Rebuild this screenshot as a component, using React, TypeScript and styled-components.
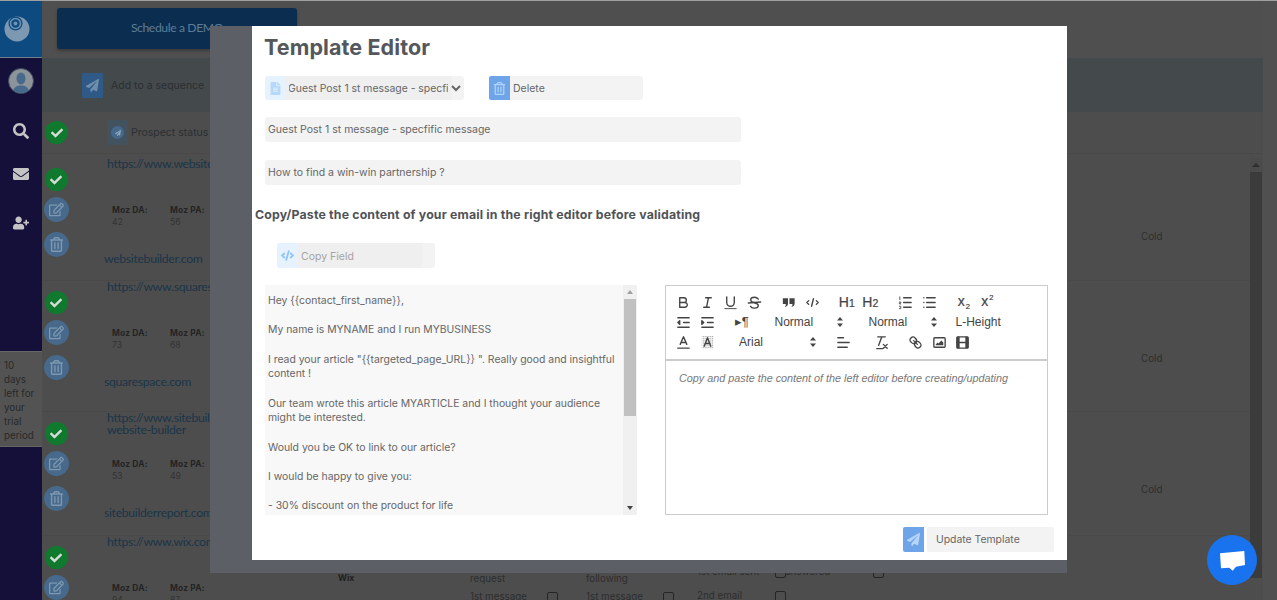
import React from "react";
import styled, { createGlobalStyle } from "styled-components";
import { FaCheck, FaCode, FaEnvelope, FaFileAlt, FaPaperPlane, FaRegEdit, FaRegTrashAlt, FaSearch, FaUserPlus } from "react-icons/fa";

const Global = createGlobalStyle`
  html, body { margin: 0; padding: 0; height: 600px; overflow: hidden; background: #505050; }
  * { box-sizing: border-box; }
  body { font-family: Inter, "Open Sans", sans-serif; }
`;

const Page = styled.div`
  display: flex; height: 600px; overflow: hidden; border-top: 1px solid #a0a0a0;
`;
const Sidebar = styled.aside`
  width: 42px; flex: none; background: #15103a; display: flex; flex-direction: column; align-items: center;
`;
const LogoBlock = styled.div`
  width: 42px; height: 57px; background: #0c4a80; border-bottom: 1px solid #6f7f8c; display: flex; align-items: center; justify-content: center; padding: 0 8px 1px 0;
`;
const Avatar = styled.div`
  width: 26px; height: 26px; margin-top: 10px; border-radius: 50%; overflow: hidden; background: #8d9499; border: 1px solid #3d4660;
`;
const NavIcon = styled.div<{ $mt: number }>`
  margin-top: ${p => p.$mt}px; height: 18px; color: #c4c4c4; font-size: 16px; line-height: 18px;
`;
const TrialNote = styled.div`
  width: 42px; margin-top: 118px; height: 96px; padding: 7px 4px 0 4px; background: #535353; border-top: 1px solid #666; border-bottom: 1px solid #666;
  font-size: 9.8px; line-height: 14.1px; color: #292929;
`;
const Main = styled.main`
  width: 1221px; flex: none; position: relative; background: #4d4d4d;
`;
const TopBar = styled.div`
  height: 57px; background: #4f4f4f; padding: 7px 0 0 15px;
`;
const DemoButton = styled.div`
  width: 240px; height: 41px; border-radius: 3px; background: #0b2d50; color: #5d7d97; text-align: center;
  font: 12.2px/39px Lato, sans-serif; letter-spacing: -.4px; box-shadow: 0 2px 3px #3a3a3a;
`;
const Band = styled.div`
  height: 54px; background: #44494c; display: flex; align-items: center; padding: 0 0 0 40px;
`;
const SquareIcon = styled.div<{ $bg: string; $fg: string; $w?: number; $h?: number }>`
  width: ${p => p.$w ?? 21}px; height: ${p => p.$h ?? 25}px; flex: none; background: ${p => p.$bg}; color: ${p => p.$fg};
  display: flex; align-items: center; justify-content: center; font-size: 13px; border-radius: 2px 0 0 2px;
`;
const BandLabel = styled.span`
  margin-left: 8px; font-size: 10.5px; color: #2b2f33;
`;
const StatusLabel = styled.span`
  margin-left: 3px; font-size: 10.5px; color: #2b2f33;
`;
const StatusRow = styled.div`
  height: 41px; display: flex; align-items: center; padding-left: 3px;
`;
const StatusChip = styled.div`
  margin-left: 39px; display: flex; align-items: center; height: 25px;
`;
const Dot = styled.div`
  width: 13px; height: 13px; border-radius: 50%; background: #46688a; color: #8ea6bd; font-size: 6px; display: flex; align-items: center; justify-content: center;
`;
const RoundCheck = styled.div`
  width: 23px; height: 23px; flex: none; border-radius: 50%; background: #0f7a2e; color: #d5dcd7; display: flex; align-items: center; justify-content: center; font-size: 12px;
`;
const RoundAction = styled.div<{ $mt: number }>`
  width: 25px; height: 25px; flex: none; margin-top: ${p => p.$mt}px; border-radius: 50%; background: #476a8c; color: #7d98b0; display: flex; align-items: center; justify-content: center; font-size: 15px;
`;
const Row = styled.section<{ $h: number; $pt: number }>`
  height: ${p => p.$h}px; padding-top: ${p => p.$pt}px; border-top: 1px solid #494949;
  display: grid; grid-template-columns: 28px 268px 132px 116px 111px 88px 356px 1fr;
`;
const Actions = styled.div`
  padding-top: 10px; display: flex; flex-direction: column; align-items: center;
`;
const LinkBlock = styled.div`
  height: 46px; margin-left: 37px; width: 340px; font: 12.3px/12px Lato, sans-serif; letter-spacing: -.35px; color: #1b3549; white-space: pre-line;
`;
const Metrics = styled.div`
  margin-left: 42px; display: grid; grid-template-columns: 58px 58px;
`;
const MozLabel = styled.div`
  font-size: 8.4px; line-height: 12px; font-weight: 700; color: #232323; letter-spacing: .2px;
`;
const MozValue = styled.div`
  font-size: 8.6px; line-height: 12px; color: #333;
`;
const Domain = styled.div`
  margin: 23px 0 0 34px; font: 12.2px/16px Lato, sans-serif; letter-spacing: -.3px; color: #1b3549; white-space: nowrap;
`;
const Cell = styled.div<{ $pt: number }>`
  padding-top: ${p => p.$pt}px; font-size: 9.8px; line-height: 18px; color: #2d2d2d;
`;
const BoldCell = styled(Cell)`
  font-size: 8.6px; font-weight: 700; color: #1f1f1f;
`;
const StackCell = styled(Cell)`
  display: flex; flex-direction: column; gap: 6px;
`;
const CheckLine = styled.div<{ $w: number }>`
  display: grid; grid-template-columns: ${p => p.$w}px 11px; align-items: center; white-space: nowrap;
`;
const Box = styled.span`
  width: 11px; height: 11px; border: 1px solid #262626; border-radius: 2px;
`;
const Cold = styled.div<{ $pt: number }>`
  padding-top: ${p => p.$pt}px; font-size: 9.8px; line-height: 12px; color: #2e2e2e;
`;
const ScrollRail = styled.div`
  position: absolute; left: 1208px; top: 157px; width: 12px; height: 420px; background: #3b3b3b;
`;
const ScrollCap = styled.div`
  height: 14px; background: #4b4b4b; display: flex; align-items: center; justify-content: center;
  &::before { content: ""; border: 4px solid transparent; border-top: 0; border-bottom: 4px solid #2f2f2f; }
`;

const Overlay = styled.div`
  position: fixed; inset: 0; padding: 26px 0 0 210px;
`;
const Frame = styled.div`
  width: 857px; height: 547px; background: #5c6066; padding-left: 42px;
`;
const Panel = styled.div`
  width: 815px; height: 534px; background: #fff; color: #666; overflow: hidden;
`;
const Title = styled.h1`
  margin: 8px 0 0 12px; font-size: 21.5px; line-height: 26px; font-weight: 700; color: #54575c; letter-spacing: .1px;
`;
const SelectRow = styled.div`
  margin: 16px 0 0 13px; height: 24px; display: flex;
`;
const PaleIcon = styled(SquareIcon)`
  border-radius: 3px 0 0 3px;
`;
const TemplateSelect = styled.select`
  width: 179px; height: 24px; border: 0; padding: 0; outline: 0; border-radius: 0 3px 3px 0; color: #666; font: 10.4px Inter, sans-serif; text-indent: -1px;
  background: linear-gradient(90deg, #efefef 167px, #f3f3f3 167px);
`;
const DeleteGroup = styled.div`
  margin-left: 25px; display: flex;
`;
const DeleteButton = styled.div`
  width: 133px; height: 24px; background: #f3f3f3; border-radius: 0 3px 3px 0; padding-left: 3px; font-size: 10.5px; line-height: 26px; color: #666;
`;
const Field = styled.input<{ $mt: number }>`
  display: block; margin: ${p => p.$mt}px 0 0 13px; width: 476px; height: 25px; border: 0; outline: 0; border-radius: 3px; padding: 0 3px; background: #f3f3f3;
  color: #666; font: 10.5px Inter, sans-serif;
`;
const Heading = styled.h2`
  margin: 21px 0 0 3px; font-size: 12.3px; line-height: 18px; font-weight: 700; color: #4f5357; letter-spacing: .18px; white-space: nowrap;
`;
const CopyField = styled.div`
  margin: 19px 0 0 25px; width: 158px; height: 25px; display: flex; background: #f3f3f3; border-radius: 3px; overflow: hidden;
`;
const CopyLabel = styled.div`
  width: 124px; background: #efefef; padding-left: 3px; color: #a4a4a4; font-size: 10.5px; line-height: 27px;
`;
const Editors = styled.div`
  margin: 17px 0 0 13px; height: 230px; display: flex; gap: 28px;
`;
const SourcePane = styled.div`
  width: 372px; height: 230px; background: #f8f8f8; display: flex;
`;
const SourceText = styled.div`
  flex: 1; padding: 9px 7px 0 3px; overflow: hidden; font-size: 10.4px; line-height: 14.67px; color: #666;
  p { margin: 0 0 14.67px; }
`;
const SourceBar = styled.div`
  width: 14px; flex: none; background: #f0f0f0; display: flex; flex-direction: column; align-items: center;
`;
const BarCap = styled.div<{ $down?: boolean }>`
  height: 14px; width: 14px; display: flex; align-items: center; justify-content: center;
  &::before { content: ""; border: 3.5px solid transparent; ${p => p.$down ? "border-bottom:0;border-top:4px solid #444;" : "border-top:0;border-bottom:4px solid #a0a0a0;"} }
`;
const BarThumb = styled.div`
  width: 12px; height: 117px; background: #c1c1c1;
`;
const BarRest = styled.div`
  flex: 1;
`;
const QuillBox = styled.div`
  width: 383px; height: 230px; border: 1px solid #ccc; display: flex; flex-direction: column;
`;
const Toolbar = styled.div`
  height: 75px; flex: none; padding: 6px 0 0 6px; border-bottom: 2px solid #ccc;
`;
const ToolRow = styled.div`
  height: 20px; display: flex; align-items: center;
`;
const Tool = styled.span<{ $ml?: number }>`
  width: 23.5px; height: 20px; flex: none; margin-left: ${p => p.$ml ?? 0}px; display: flex; align-items: center; justify-content: center; color: #444;
  font: 13px/20px "Liberation Sans", sans-serif; white-space: nowrap;
  svg { width: 17px; height: 17px; fill: none; stroke: #444; stroke-width: 1.45; stroke-linecap: round; stroke-linejoin: round; }
`;
const ScriptMark = styled.span`
  font-size: 14px; -webkit-text-stroke: .2px #444;
`;
const SubDigit = styled.small`
  font-size: 7.5px; position: relative; top: 3px; margin-left: 1px;
`;
const SupDigit = styled.small`
  font-size: 7.5px; position: relative; top: -6px; margin-left: 1px;
`;
const HeadMark = styled.span`
  font-size: 14px; -webkit-text-stroke: .2px #444;
  small { font-size: 10.5px; }
`;
const Picker = styled.span<{ $w: number; $ml: number }>`
  width: ${p => p.$w}px; flex: none; margin-left: ${p => p.$ml}px; display: flex; justify-content: space-between; align-items: center; color: #444;
  font: 12px/20px "Liberation Sans", sans-serif;
  svg { width: 18px; height: 18px; margin-right: -5px; fill: #444; }
`;
const Placeholder = styled.div`
  padding: 10px 13px; font: italic 10.8px/15px "Liberation Sans", sans-serif; color: #777;
`;
const Footer = styled.div`
  margin-top: 12px; padding-right: 13px; display: flex; justify-content: flex-end;
`;
const UpdateButton = styled.div`
  margin-left: 3px; width: 127px; height: 25px; background: #f3f3f3; border-radius: 2px; padding-left: 9px; font-size: 10.4px; line-height: 26px; color: #666;
`;
const ChatBubble = styled.div`
  position: fixed; left: 1207px; top: 535px; width: 50px; height: 50px; border-radius: 50%; background: #1a73ee;
  display: flex; align-items: center; justify-content: center;
`;

const Picks = () => (
  <svg viewBox="0 0 18 18"><polygon points="6,10.5 9,14 12,10.5" /><polygon points="6,7.5 9,4 12,7.5" /></svg>
);

const rows = [
  { h: 127, pt: 4, coldTop: 73, link: "https://www.websitebuilder.com/", domain: "websitebuilder.com", da: 42, pa: 56 },
  { h: 131, pt: 0, coldTop: 72, link: "https://www.squarespace.com/", domain: "squarespace.com", da: 73, pa: 68 },
  { h: 124, pt: 0, coldTop: 72, link: "https://www.sitebuilderreport.com/\nwebsite-builder", domain: "sitebuilderreport.com", da: 53, pa: 49 },
  { h: 70, pt: 0, coldTop: 72, link: "https://www.wix.com/", domain: "wix.com", da: 94, pa: 87, extra: true },
];

export default function App() {
  return (
    <>
      <Global />
      <Page>
        <Sidebar>
          <LogoBlock>
            <svg width="26" height="26" viewBox="0 0 26 26">
              <circle cx="13" cy="13" r="12.5" fill="#7d99b1" />
              <circle cx="11.500" cy="7.500" r="7" fill="#0c4a80" />
              <circle cx="11.500" cy="7.500" r="5" fill="none" stroke="#6c93b3" strokeWidth="1.600" />
              <circle cx="11.500" cy="7.500" r="2" fill="#6c93b3" />
            </svg>
          </LogoBlock>
          <Avatar>
            <svg width="24" height="24" viewBox="0 0 24 24">
              <ellipse cx="12" cy="9.500" rx="4.500" ry="6" fill="#47698c" />
              <path d="M4 24c0-6 4-7.500 8-7.500s8 1.500 8 7.500z" fill="#47698c" />
            </svg>
          </Avatar>
          <NavIcon $mt={29}><FaSearch /></NavIcon>
          <NavIcon $mt={25}><FaEnvelope /></NavIcon>
          <NavIcon $mt={31}><FaUserPlus /></NavIcon>
          <TrialNote>10 days left for your trial period</TrialNote>
        </Sidebar>
        <Main>
          <TopBar><DemoButton>Schedule a DEMO</DemoButton></TopBar>
          <Band>
            <SquareIcon $bg="#2f5a87" $fg="#6f8fab"><FaPaperPlane /></SquareIcon>
            <BandLabel>Add to a sequence</BandLabel>
          </Band>
          <StatusRow>
            <RoundCheck><FaCheck /></RoundCheck>
            <StatusChip>
              <SquareIcon $bg="#43525f" $fg="#8ea6bd"><Dot><FaPaperPlane /></Dot></SquareIcon>
              <StatusLabel>Prospect status</StatusLabel>
            </StatusChip>
          </StatusRow>
          {rows.map(r => (
            <Row key={r.domain} $h={r.h} $pt={r.pt}>
              <Actions>
                <RoundCheck><FaCheck /></RoundCheck>
                <RoundAction $mt={6}><FaRegEdit /></RoundAction>
                <RoundAction $mt={10}><FaRegTrashAlt /></RoundAction>
              </Actions>
              <div>
                <LinkBlock>{r.link}</LinkBlock>
                <Metrics>
                  <MozLabel>Moz DA:</MozLabel><MozLabel>Moz PA:</MozLabel>
                  <MozValue>{r.da}</MozValue><MozValue>{r.pa}</MozValue>
                </Metrics>
                <Domain>{r.domain}</Domain>
              </div>
              {r.extra ? (
                <>
                  <BoldCell $pt={33}>Wix</BoldCell>
                  <Cell $pt={34}>request<CheckLine $w={77}>1st message<Box /></CheckLine></Cell>
                  <Cell $pt={34}>following<CheckLine $w={77}>1st message<Box /></CheckLine></Cell>
                  <StackCell $pt={27}><CheckLine $w={78}>1st email sent<Box /></CheckLine><CheckLine $w={78}>2nd email<Box /></CheckLine></StackCell>
                  <Cell $pt={27}><CheckLine $w={88}>answered<Box /></CheckLine></Cell>
                </>
              ) : (
                <>
                  <span /><span /><span /><span /><span />
                  <Cold $pt={r.coldTop}>Cold</Cold>
                </>
              )}
            </Row>
          ))}
          <ScrollRail><ScrollCap /></ScrollRail>
        </Main>
      </Page>

      <Overlay>
        <Frame>
          <Panel>
            <Title>Template Editor</Title>
            <SelectRow>
              <PaleIcon $bg="#e6f2fe" $fg="#b5d8fb" $w={20} $h={24}><FaFileAlt /></PaleIcon>
              <TemplateSelect defaultValue="a">
                <option value="a">Guest Post 1 st message - specfific message</option>
              </TemplateSelect>
              <DeleteGroup>
                <SquareIcon $bg="#6ea5e8" $fg="#b5d4f7" $h={24}><FaRegTrashAlt /></SquareIcon>
                <DeleteButton>Delete</DeleteButton>
              </DeleteGroup>
            </SelectRow>
            <Field $mt={17} readOnly value="Guest Post 1 st message - specfific message" />
            <Field $mt={18} readOnly value="How to find a win-win partnership ?" />
            <Heading>Copy/Paste the content of your email in the right editor before validating</Heading>
            <CopyField>
              <SquareIcon $bg="#e6f2fe" $fg="#8fc4fa"><FaCode /></SquareIcon>
              <CopyLabel>Copy Field</CopyLabel>
            </CopyField>
            <Editors>
              <SourcePane>
                <SourceText>
                  <p>Hey {"{{contact_first_name}}"},</p>
                  <p>My name is MYNAME and I run MYBUSINESS</p>
                  <p>I read your article "{"{{targeted_page_URL}}"} ". Really good and insightful content !</p>
                  <p>Our team wrote this article MYARTICLE and I thought your audience might be interested.</p>
                  <p>Would you be OK to link to our article?</p>
                  <p>I would be happy to give you:</p>
                  <p>- 30% discount on the product for life</p>
                </SourceText>
                <SourceBar>
                  <BarCap /><BarThumb /><BarRest /><BarCap $down />
                </SourceBar>
              </SourcePane>
              <QuillBox>
                <Toolbar>
                  <ToolRow>
                    <Tool><svg viewBox="0 0 18 18"><path d="M5 4h4.500A2.500 2.500 0 0 1 12 6.500 2.500 2.500 0 0 1 9.500 9H5zM5 9h5.500a2.500 2.500 0 0 1 2.500 2.500 2.500 2.500 0 0 1-2.500 2.500H5z" /></svg></Tool>
                    <Tool><svg viewBox="0 0 18 18"><path d="M7 4h6M5 14h6M8 14l2-10" /></svg></Tool>
                    <Tool><svg viewBox="0 0 18 18"><path d="M5 3v6a4 4 0 0 0 8 0V3" /><path d="M3 15.500h12" strokeWidth="1" /></svg></Tool>
                    <Tool><svg viewBox="0 0 18 18"><path d="M15.500 8.500l-13 1" /><path d="M13 5.500C12 4 10.500 3.500 9 3.500c-2 0-4 1-4 2.800 0 2 2 2.500 4 3 2 .5 4 1 4 3 0 1.700-2 2.700-4 2.700-1.700 0-3.300-.6-4.200-2" /></svg></Tool>
                    <Tool $ml={11}><svg viewBox="0 0 18 18"><path d="M3 4.500h5.500v5.500c0 2-1.200 3.300-3.500 3.800.9-1.100 1.200-2 1.200-3.300H3zM10 4.500h5.500v5.500c0 2-1.200 3.300-3.500 3.800.9-1.100 1.200-2 1.200-3.300H10z" fill="#444" stroke="none" /></svg></Tool>
                    <Tool><svg viewBox="0 0 18 18"><path d="M5 7L3 9l2 2M13 7l2 2-2 2M10 5l-2 8" /></svg></Tool>
                    <Tool $ml={11}><HeadMark>H<small>1</small></HeadMark></Tool>
                    <Tool><HeadMark>H<small>2</small></HeadMark></Tool>
                    <Tool $ml={12}><svg viewBox="0 0 18 18"><path d="M7 4h8M7 9h8M7 14h8" /><path d="M3 3v3M2.500 8.500h1.500v1h-1.500v1h1.500M2.500 13h1.500v2.500h-1.500" strokeWidth=".9" /></svg></Tool>
                    <Tool><svg viewBox="0 0 18 18"><path d="M6 4h9M6 9h9M6 14h9M3 4h.1M3 9h.1M3 14h.1" /></svg></Tool>
                    <Tool $ml={11}><ScriptMark>x<SubDigit>2</SubDigit></ScriptMark></Tool>
                    <Tool><ScriptMark>x<SupDigit>2</SupDigit></ScriptMark></Tool>
                  </ToolRow>
                  <ToolRow>
                    <Tool><svg viewBox="0 0 18 18"><path d="M3 14h12M3 4h12M9 9h6" /><path d="M5 7v4L3 9z" fill="#444" /></svg></Tool>
                    <Tool><svg viewBox="0 0 18 18"><path d="M3 14h12M3 4h12M9 9h6" /><path d="M3 7v4l2-2z" fill="#444" /></svg></Tool>
                    <Tool $ml={11}>▸¶</Tool>
                    <Picker $w={69} $ml={21}>Normal<Picks /></Picker>
                    <Picker $w={69} $ml={25}>Normal<Picks /></Picker>
                    <Picker $w={50} $ml={18}>L-Height</Picker>
                  </ToolRow>
                  <ToolRow>
                    <Tool><svg viewBox="0 0 18 18"><path d="M3 15h12M5.500 11L9 3l3.500 8M11.600 9H6.400" /></svg></Tool>
                    <Tool><svg viewBox="0 0 18 18"><defs><pattern id="hatch" width="2" height="2" patternUnits="userSpaceOnUse"><rect width="1" height="1" fill="#888" stroke="none" /></pattern></defs><rect x="3" y="2" width="12" height="14" fill="url(#hatch)" stroke="none" /><path d="M5.500 13L9 4l3.500 9M11.600 10H6.400" /></svg></Tool>
                    <Picker $w={78} $ml={20}>Arial<Picks /></Picker>
                    <Tool $ml={15}><svg viewBox="0 0 18 18"><path d="M3 9h12M3 14h10M3 4h6" /></svg></Tool>
                    <Tool $ml={14}><svg viewBox="0 0 18 18"><path d="M5 3h8M6 12l3.350-9M11 11l4 4M15 11l-4 4M4 15.500h6" /></svg></Tool>
                    <Tool $ml={11}><svg viewBox="0 0 18 18"><path d="M7 7l4 4" /><path d="M8.900 4.577a3.476 3.476 0 0 1 .36 4.679A3.476 3.476 0 0 1 4.577 8.900C3.185 7.500 2.035 6.400 4.217 4.217S7.500 3.185 8.900 4.577z" /><path d="M13.423 9.100a3.476 3.476 0 0 0-4.679-.36 3.476 3.476 0 0 0 .36 4.679c1.392 1.392 2.500 2.542 4.679.36s1.032-3.285-.36-4.679z" /></svg></Tool>
                    <Tool><svg viewBox="0 0 18 18"><rect x="3" y="4" width="12" height="10" rx="1" /><path d="M5 12v-1l2-2 1 1 3-3 2 2v3z" fill="#444" stroke="none" /></svg></Tool>
                    <Tool><svg viewBox="0 0 18 18"><rect x="3" y="3" width="12" height="12" rx="1" /><path d="M3 9h12" /><path d="M3 3h3v12H3zM12 3h3v12h-3z" fill="#444" stroke="none" /></svg></Tool>
                  </ToolRow>
                </Toolbar>
                <Placeholder>Copy and paste the content of the left editor before creating/updating</Placeholder>
              </QuillBox>
            </Editors>
            <Footer>
              <SquareIcon $bg="#6ea5e8" $fg="#b5d4f7"><FaPaperPlane /></SquareIcon>
              <UpdateButton>Update Template</UpdateButton>
            </Footer>
          </Panel>
        </Frame>
      </Overlay>
      <ChatBubble>
        <svg width="50" height="50" viewBox="0 0 50 50"><polygon points="13,18.300 37.300,16 38,30 29,31.700 25.700,35.700 22.300,32.700 14,33.300" fill="#fff" /></svg>
      </ChatBubble>
    </>
  );
}
